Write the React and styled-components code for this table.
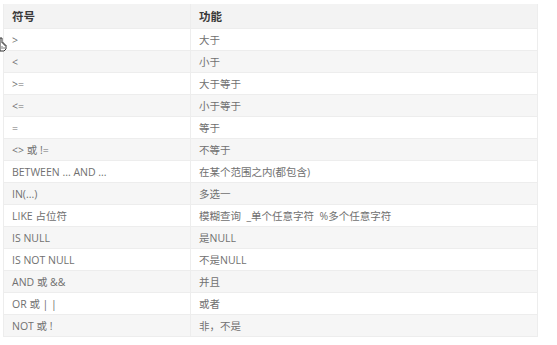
import React from 'react';
import styled, { createGlobalStyle } from 'styled-components';

const GlobalStyle = createGlobalStyle`
  html, body {
    margin: 0;
    padding: 0;
    background: #ffffff;
  }
  body {
    font-family: "Open Sans", "Noto Sans CJK SC", sans-serif;
  }
`;

const Page = styled.div`
  position: relative;
  width: 557px;
  height: 345px;
  padding: 4px 0 0 3px;
  box-sizing: border-box;
  overflow: hidden;
`;

const Table = styled.table`
  width: 535px;
  border-collapse: collapse;
  table-layout: fixed;
  font-size: 10.5px;
  color: #707070;
`;

const HeadCell = styled.th`
  height: 24px;
  padding: 0 0 0 8px;
  text-align: left;
  font-size: 11.5px;
  font-weight: 700;
  color: #3a3a3a;
  background: #f3f3f3;
  border: 1px solid #ededed;
  border-top: none;
`;

const Row = styled.tr`
  background: ${(p) => (p.$striped ? '#f6f6f6' : '#ffffff')};
`;

const Cell = styled.td`
  height: 21px;
  padding: 0 0 0 8px;
  border: 1px solid #ededed;
  white-space: pre;
`;

const Cursor = styled.svg`
  position: absolute;
  left: 0;
  top: 37px;
`;

const rows = [
  ['>', '大于'],
  ['<', '小于'],
  ['>=', '大于等于'],
  ['<=', '小于等于'],
  ['=', '等于'],
  ['<> 或 !=', '不等于'],
  ['BETWEEN ... AND ...', '在某个范围之内(都包含)'],
  ['IN(...)', '多选一'],
  ['LIKE 占位符', '模糊查询  _单个任意字符  %多个任意字符'],
  ['IS NULL', '是NULL'],
  ['IS NOT NULL', '不是NULL'],
  ['AND 或 &&', '并且'],
  ['OR 或 | |', '或者'],
  ['NOT 或 !', '非，不是'],
];

export default function App() {
  return (
    <Page>
      <GlobalStyle />
      <Table>
        <colgroup>
          <col style={{ width: '187px' }} />
          <col />
        </colgroup>
        <thead>
          <tr>
            <HeadCell>符号</HeadCell>
            <HeadCell>功能</HeadCell>
          </tr>
        </thead>
        <tbody>
          {rows.map(([sym, desc], i) => (
            <Row key={i} $striped={i % 2 === 1}>
              <Cell>{sym}</Cell>
              <Cell>{desc}</Cell>
            </Row>
          ))}
        </tbody>
      </Table>
      <Cursor width="7" height="15" viewBox="0 0 7 15">
        <path
          d="M0 1 L2 1 L2 6 L4 6 L4 8 L6 8 L6 12 L4 14 L0 14 Z"
          fill="#ffffff"
          stroke="#333"
          strokeWidth="1"
        />
        <path d="M2 9 L2 12 M4 10 L4 12" stroke="#555" strokeWidth="0.8" />
      </Cursor>
    </Page>
  );
}
